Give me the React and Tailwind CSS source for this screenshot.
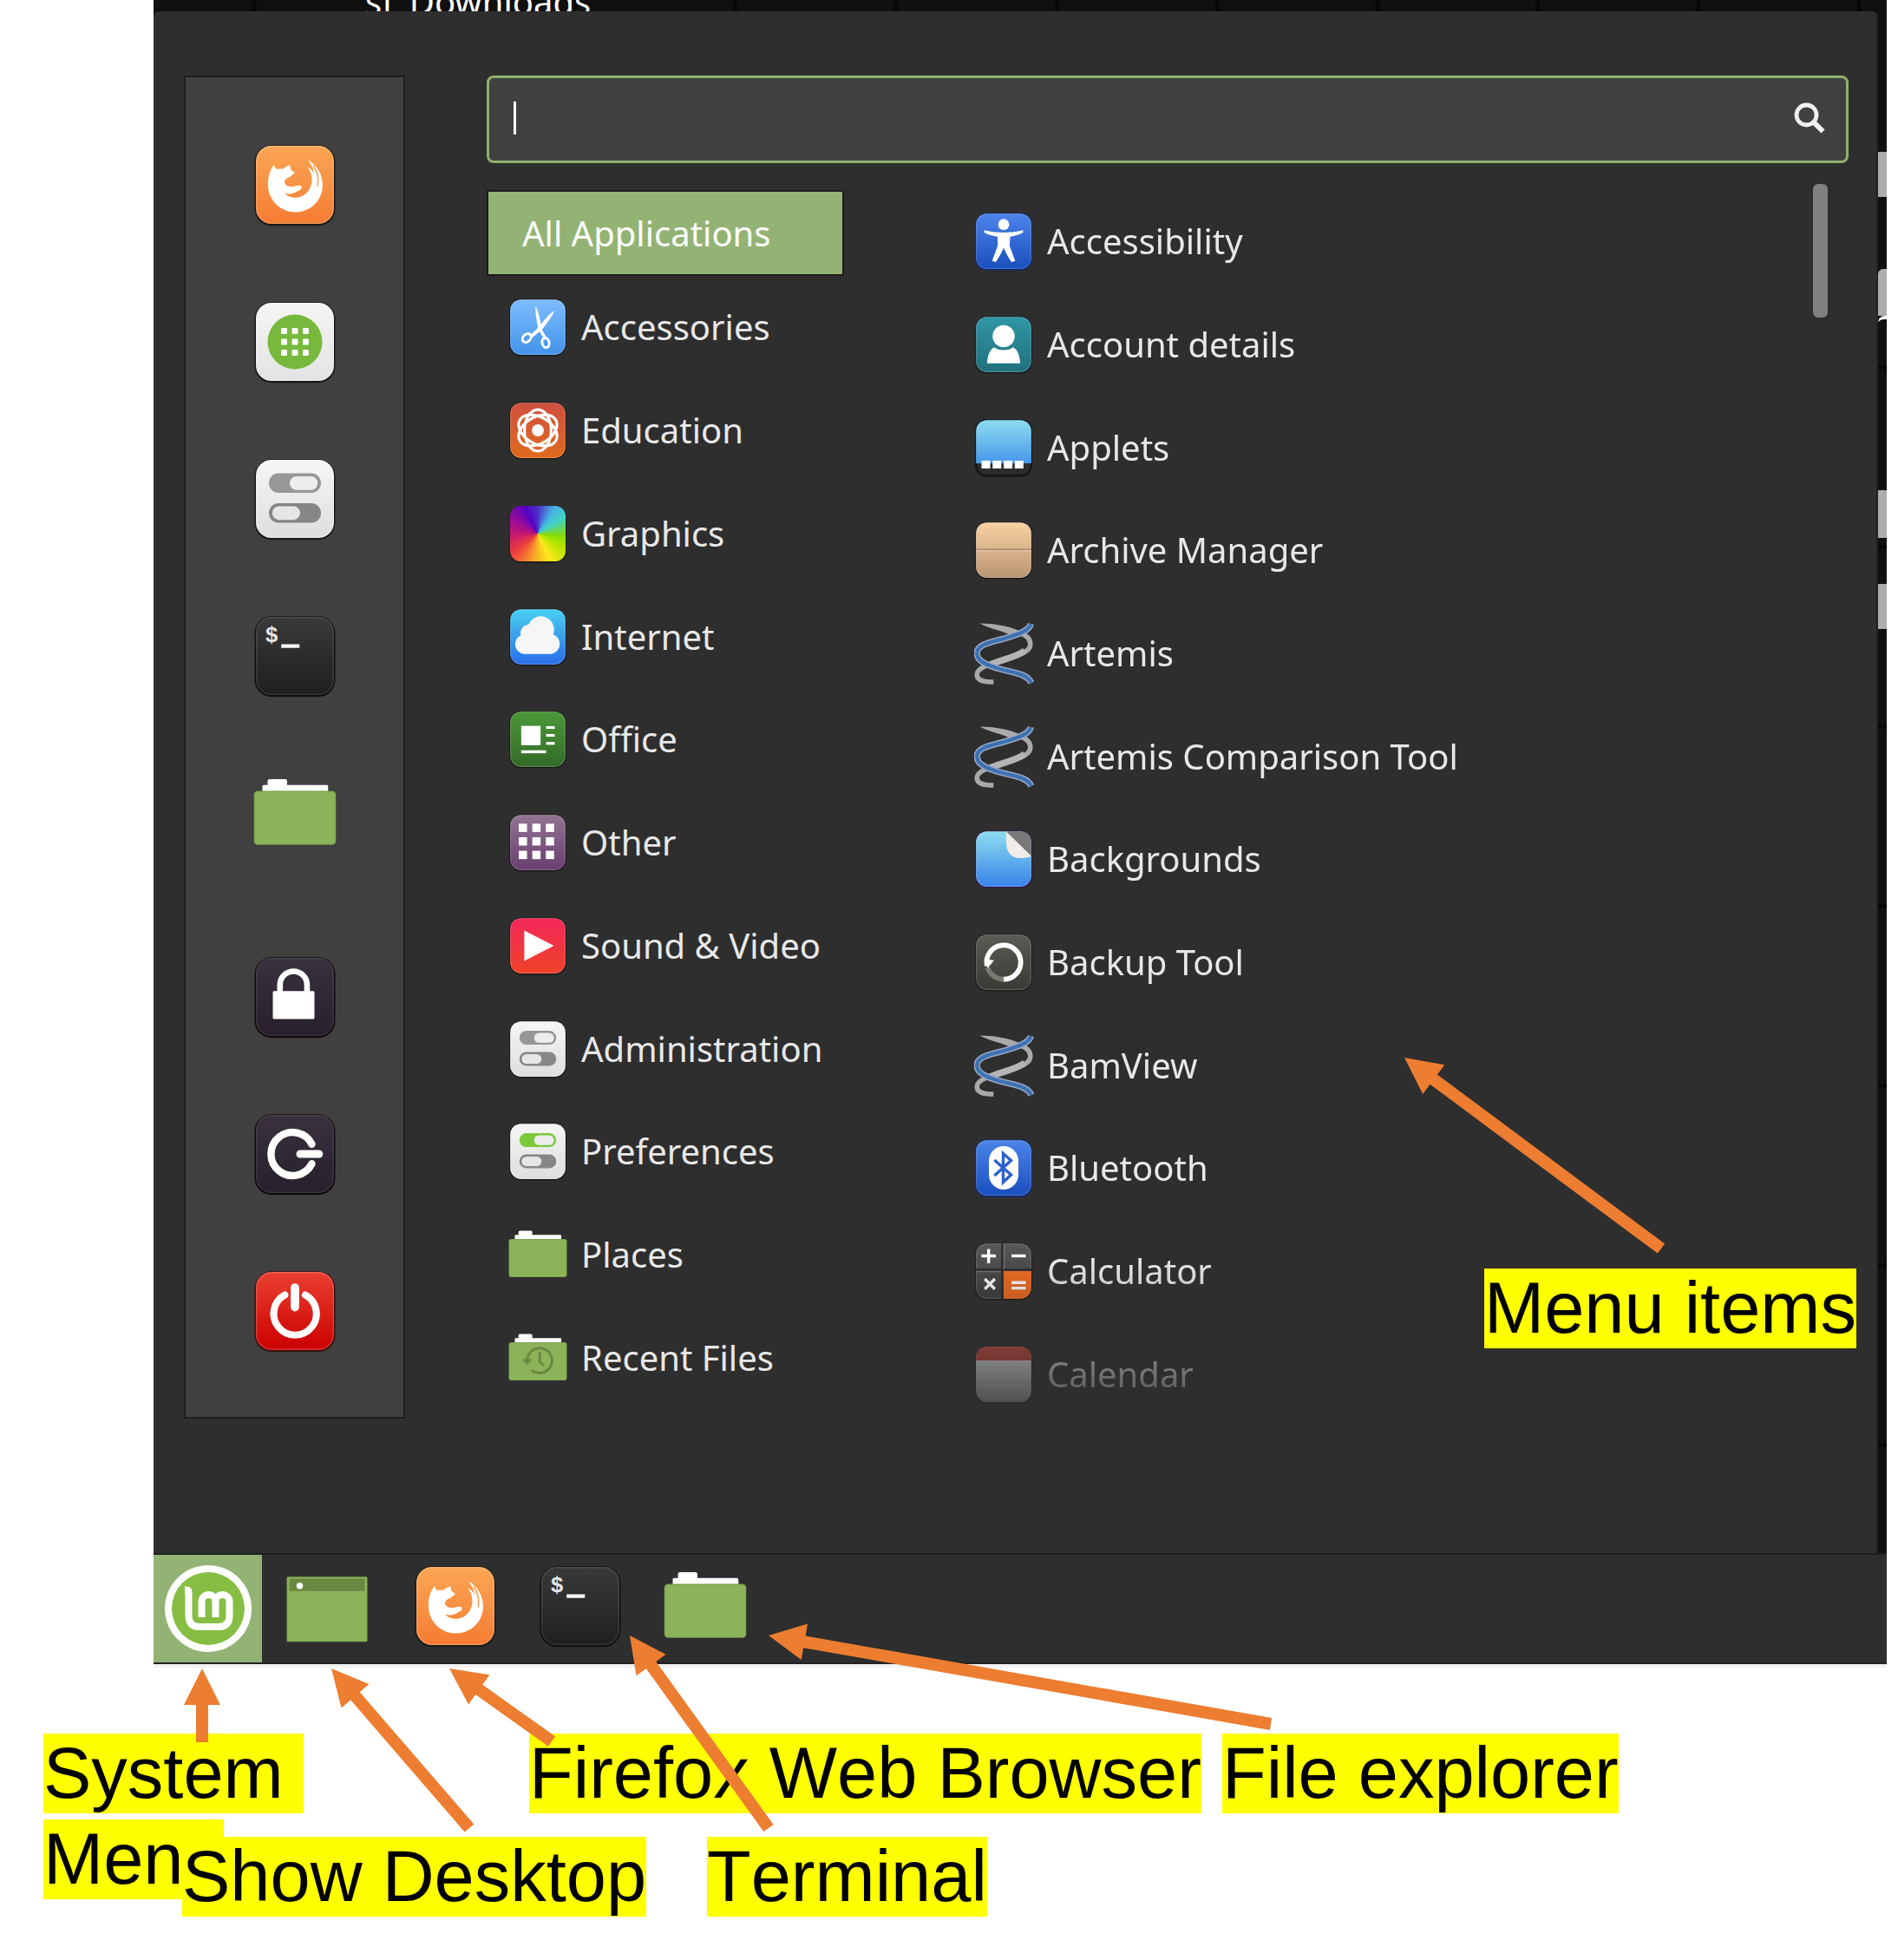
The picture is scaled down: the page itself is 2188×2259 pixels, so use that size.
import React, { useId } from "react";

/* ---------- icon building blocks (64-unit grid) ---------- */

function Svg({ children }) {
  return (
    <svg viewBox="0 0 64 64" className="size-full overflow-visible" aria-hidden="true">
      {children}
    </svg>
  );
}

function Tile({ from, to, edge = "#1a1a1a", shine = 0.18, children }) {
  const id = useId();
  return (
    <Svg>
      <defs>
        <linearGradient id={id} x1="0" y1="0" x2="0" y2="1">
          <stop offset="0" stopColor={from} />
          <stop offset="1" stopColor={to} />
        </linearGradient>
      </defs>
      <rect x="1" y="1.5" width="62" height="62" rx="13" fill={edge} />
      <rect x="2" y="2" width="60" height="60" rx="12" fill={`url(#${id})`} />
      <rect x="2.5" y="2.5" width="59" height="59" rx="11.5" fill="none" stroke="#fff" strokeOpacity={shine} />
      {children}
    </Svg>
  );
}

function Firefox() {
  return (
    <Tile from="#fba654" to="#f57c33">
      <path
        fill="#fff"
        d="M15.9 16.5C12.5 21 11 27 11.3 32.5C11.5 44 21 53 32.3 53C44 53 53.3 44 53.3 32C53.3 24 49 17 42 12.6C45 17 46.500 20 46.800 23.500C45.500 21 44 19.500 42 18.500C46 25 46 32 42.100 36.900C39 41 35 42 32.300 41.800C28 41.800 25 40 24.300 38.400C27 39.500 30 39 32 38C34.500 36.500 37.500 36 37 33.500C36.500 31.800 34 32.500 32 33C28 34 24.500 33 24 30C24.200 27 27 26.500 28 26C29 24.800 31 24 32 22.500C29.500 21.500 28 19.500 28.500 17C26 17.300 24 18.600 22.500 20C20.500 19.500 19 19.800 18 20C17 19 16.200 18 15.900 16.500Z"
      />
      <path d="M46 17C49.500 22 50.500 27 49.500 33" fill="none" stroke="#fba04f" strokeWidth="1" />
    </Tile>
  );
}

function Software() {
  const spots = [23.7, 32, 40.3];
  return (
    <Tile from="#f5f5f5" to="#e3e3e3">
      <circle cx="32" cy="32" r="21" fill="#77b93d" />
      {spots.map((y) =>
        spots.map((x) => <rect key={`${x}-${y}`} x={x - 2.3} y={y - 2.3} width="4.6" height="4.6" rx="0.8" fill="#fff" />)
      )}
    </Tile>
  );
}

function Toggles({ top = "#979797" }) {
  return (
    <Tile from="#f6f6f6" to="#dedede">
      <rect x="12" y="12.300" width="40" height="15" rx="7.500" fill={top} />
      <rect x="28" y="14.700" width="21.500" height="10.500" rx="5.200" fill="#ededed" />
      <rect x="12" y="35.300" width="40" height="15" rx="7.500" fill="#868686" />
      <rect x="14.500" y="37.600" width="21.500" height="10.500" rx="5.200" fill="#e6e6e6" />
    </Tile>
  );
}

function Preferences() {
  return <Toggles top="#7cc93c" />;
}

function Terminal() {
  return (
    <Tile from="#393939" to="#1f1f1f" edge="#101010" shine={0.1}>
      <text x="9" y="21" fontSize="17" fontWeight="700" fill="#e6e6e6" fontFamily="'Liberation Mono', monospace">$</text>
      <rect x="21.500" y="23" width="14" height="2.800" fill="#fff" />
    </Tile>
  );
}

function Folder({ children }) {
  return (
    <Svg>
      <path d="M7 17V11.500Q7 10.500 8 10.500H11V7.500Q11 6 12.500 6H24.500Q26 6 26 7.500V10.500H56.500Q57.500 10.500 57.500 11.500V17Z" fill="#fff" />
      <rect x="0.500" y="15" width="63" height="41.500" rx="3" fill="#7a9f4b" />
      <rect x="1" y="15.800" width="62" height="40" rx="2.500" fill="#8cb25a" />
      {children}
    </Svg>
  );
}

function RecentFolder() {
  return (
    <Folder>
      <g fill="none" stroke="#69893f" strokeWidth="2.800">
        <path d="M20.500 35A13.500 13.500 0 1 1 25 45" />
        <path d="M34 26V36L38.500 40.500" />
      </g>
      <path d="M15 33.500H26L20.500 40Z" fill="#69893f" />
    </Folder>
  );
}

function Lock() {
  return (
    <Tile from="#39313d" to="#271f2c" edge="#0e0c10" shine={0.08}>
      <path d="M20.500 29V22.700A10.400 10.400 0 0 1 41.300 22.700V29" fill="none" stroke="#fff" strokeWidth="4.400" />
      <rect x="15" y="27.500" width="32" height="21.500" rx="1" fill="#fff" />
    </Tile>
  );
}

function Logout() {
  return (
    <Tile from="#39313d" to="#271f2c" edge="#0e0c10" shine={0.08}>
      <g fill="none" stroke="#fff" strokeWidth="5.600" strokeLinecap="round">
        <path d="M45 24.500A16.600 16.600 0 1 0 45 39.500" />
        <path d="M36 32H50.500" strokeWidth="6" />
      </g>
    </Tile>
  );
}

function Power() {
  return (
    <Tile from="#ea4030" to="#cb0000" edge="#3a1010">
      <g fill="none" stroke="#fff" strokeWidth="5.400" strokeLinecap="round">
        <path d="M24.200 19.700A16.400 16.400 0 1 0 40 19.700" />
        <path d="M32 14V29" strokeWidth="6.500" />
      </g>
    </Tile>
  );
}

function Scissors() {
  return (
    <Tile from="#7dbcff" to="#4394ea">
      <path d="M29.500 9.500C31.500 12 36 27 36 34L42.500 45L39 45.500L33 35C31 28 29 15 29.500 9.500Z" fill="#fff" />
      <path d="M50 14C49 18 42 28 37 34L26.500 43L24 40.500L33 32C38 25 45 17 50 14Z" fill="#fff" />
      <g fill="none" stroke="#fff" strokeWidth="2.800">
        <ellipse cx="20" cy="43.800" rx="5.200" ry="4" transform="rotate(-45 20 43.800)" />
        <ellipse cx="40.500" cy="49" rx="3.800" ry="5.200" transform="rotate(-15 40.500 49)" />
      </g>
    </Tile>
  );
}

function Education() {
  return (
    <Tile from="#cf4f3f" to="#df6a1e">
      <g fill="none" stroke="#fff" strokeWidth="3">
        <ellipse cx="32" cy="32" rx="22.500" ry="14.500" transform="rotate(30 32 32)" />
        <ellipse cx="32" cy="32" rx="22.500" ry="14.500" transform="rotate(90 32 32)" />
        <ellipse cx="32" cy="32" rx="22.500" ry="14.500" transform="rotate(150 32 32)" />
      </g>
      <circle cx="32" cy="32" r="6.500" fill="#fff" />
    </Tile>
  );
}

function Graphics() {
  return (
    <span className="block size-full p-[2px]">
      <span className="block size-full rounded-[12px] bg-[conic-gradient(from_335deg,#5203c4,#4a30c8_25deg,#45b6e2_60deg,#45d2c0_85deg,#86dd08_120deg,#b4e600_145deg,#ffe81e_180deg,#f6a428_215deg,#ee3f3c_255deg,#c81a6c_290deg,#9c0c98_325deg,#5203c4)] shadow-[0_1px_2px_#111]" />
    </span>
  );
}

function Cloud() {
  return (
    <Tile from="#48d0f2" to="#2a6de8">
      <path
        d="M17 50.500A10.500 10.500 0 0 1 13.500 30.500A9.500 9.500 0 0 1 22 18.500A13 13 0 0 1 48.500 29.500A10.800 10.800 0 0 1 46 50.500Z"
        fill="#f6f6f6"
      />
    </Tile>
  );
}

function Office() {
  return (
    <Tile from="#4b9838" to="#336a28">
      <g fill="#fff">
        <rect x="14" y="17.500" width="21" height="21" />
        <rect x="41" y="17.800" width="9.300" height="3" />
        <rect x="41" y="26.300" width="9.300" height="3" />
        <rect x="41" y="35" width="9.300" height="3" />
        <rect x="14" y="44" width="27" height="3.200" />
      </g>
    </Tile>
  );
}

function Other() {
  const spots = [11.3, 26, 40.7];
  return (
    <Tile from="#917492" to="#693e70">
      {spots.map((y) => spots.map((x) => <rect key={`${x}-${y}`} x={x} y={y + 0.3} width="9" height="9" fill="#fff" />))}
    </Tile>
  );
}

function Media() {
  return (
    <Tile from="#f3285a" to="#ef4228">
      <path d="M17.300 15.500L49.500 32L17.300 48.500Z" fill="#fff" />
    </Tile>
  );
}

function Accessibility() {
  return (
    <Tile from="#4c84ea" to="#1a4fbe" edge="#0b2a72">
      <circle cx="32" cy="13.800" r="6" fill="#fff" />
      <path
        d="M11 20C18 22 25 22.500 32 22.500S46 22 53 20L53 22.500C49 25 44 26 39 27L38.500 37L44.500 53.500L40.500 54.500C38 51 35 46 32 39C29 46 26 51 23.500 54.500L19.500 53.500L25.500 37L25.500 27C20 26 15 25 11 22.500Z"
        fill="#fff"
      />
    </Tile>
  );
}

function Account() {
  return (
    <Tile from="#3196a4" to="#20707f">
      <circle cx="32" cy="23" r="12" fill="#fff" />
      <path d="M22 35C26 39 38 39 42 35C47 37 49.500 44 50 52.500H14C14.500 44 17 37 22 35Z" fill="#fff" />
    </Tile>
  );
}

function Applets() {
  const id = useId();
  return (
    <Svg>
      <defs>
        <linearGradient id={id} x1="0" y1="0" x2="0" y2="1">
          <stop offset="0" stopColor="#8edcf0" />
          <stop offset="1" stopColor="#4697ea" />
        </linearGradient>
      </defs>
      <rect x="1" y="1.500" width="62" height="62" rx="12" fill="#151515" />
      <path d="M3 49H61V51A10 10 0 0 1 51 61H13A10 10 0 0 1 3 51Z" fill="#2c2c2c" />
      <path d="M2 49V14A12 12 0 0 1 14 2H50A12 12 0 0 1 62 14V49Z" fill={`url(#${id})`} />
      <g fill="#fff">
        <rect x="8" y="46" width="9.500" height="8.500" />
        <rect x="20" y="46" width="9.500" height="8.500" />
        <rect x="32" y="46" width="9.500" height="8.500" />
        <rect x="44" y="46" width="9.500" height="8.500" />
      </g>
    </Svg>
  );
}

function Archive() {
  return (
    <Tile from="#f8d2a2" to="#b99472">
      <path d="M2 31.300H62" stroke="#a58a6c" strokeWidth="1.600" />
      <path d="M2 32.800H62" stroke="#e6c7a4" strokeWidth="1.200" />
    </Tile>
  );
}

function Helix() {
  const blue = "M61.500 0C60 7 50 11 34 15.500C18 20 3 22 3 32C3 40 12 44 26 48.500C42 53 58 54 62 64";
  return (
    <Svg>
      <path d="M6 -0.500C26 -0.500 44 4 56 11C51 15 44 14 37 11C28 7 16 5 6 -0.500Z" fill="#a9a9ac" />
      <path
        d="M50 10C58 13 61 17 61 22C61 29 52 33 40 37C24 41.500 3 46 3 55C3 61 9 63 21 63"
        fill="none"
        stroke="#a9a9ac"
        strokeWidth="5.200"
      />
      <path d="M55 29C46 37 26 39 14 46" fill="none" stroke="#b4b4b6" strokeWidth="7" />
      <path d={blue} fill="none" stroke="#98a4c4" strokeWidth="7" />
      <path d={blue} fill="none" stroke="#3c72b2" strokeWidth="4" />
    </Svg>
  );
}

function Backgrounds() {
  return (
    <Tile from="#8edcf0" to="#3884ea" edge="#38124c">
      <path d="M34.600 2H50A12 12 0 0 1 62 14V29Z" fill="#787878" />
      <path d="M34.600 2C35 8 34 14 35.500 20C37.500 27 42 31 50 31C56 31.200 59 30.500 62 29C53 20 43 10 34.600 2Z" fill="#f1ece6" />
    </Tile>
  );
}

function Backup() {
  return (
    <Tile from="#595c55" to="#383a34">
      <g fill="none" strokeWidth="5.400">
        <path d="M14.500 38A18.500 18.500 0 0 0 32 50.500" stroke="#777973" />
        <path d="M14 36A18.500 18.500 0 1 1 32 50.500" stroke="#fff" />
      </g>
      <path d="M11 28L21.500 30L14.500 38.500Z" fill="#fff" />
    </Tile>
  );
}

function Bluetooth() {
  return (
    <Tile from="#4c84ea" to="#1a4fbe" edge="#0b2a72">
      <rect x="16" y="8.500" width="32" height="47" rx="16" fill="#fff" />
      <path d="M22 23.500L40 39.500L31.500 47.500V16.500L40 24L22 40.500" fill="none" stroke="#2d62cc" strokeWidth="3.200" />
    </Tile>
  );
}

function Calculator() {
  return (
    <Tile from="#585858" to="#3c3c3c">
      <path d="M32 32H62V50A12 12 0 0 1 50 62H32Z" fill="#f06c20" />
      <path d="M30.500 2V62M2 30.500H62" stroke="#2b2b2b" strokeWidth="2.200" />
      <path d="M32.500 3V30M3 32.500H29" stroke="#757575" strokeWidth="1.200" />
      <g stroke="#fff" strokeWidth="3.200">
        <path d="M8 15.500H23.500M15.700 8V23.500" />
        <path d="M40.500 15.500H56" />
        <path d="M11.500 40.500L22.500 51.500M22.500 40.500L11.500 51.500" />
        <path d="M40.500 44.500H56M40.500 50.500H56" />
      </g>
    </Tile>
  );
}

function Calendar() {
  return (
    <Tile from="#f4f4f4" to="#dcdcdc">
      <path d="M2 17V14A12 12 0 0 1 14 2H50A12 12 0 0 1 62 14V17Z" fill="#d1473c" />
    </Tile>
  );
}

function ShowDesktop() {
  return (
    <Svg>
      <rect x="1" y="9.500" width="62" height="50" rx="1" fill="#7fa450" />
      <rect x="1.600" y="10" width="60.800" height="49" fill="#8cb25a" />
      <rect x="3" y="11" width="58" height="9.500" rx="1" fill="#698741" />
      <circle cx="11" cy="16.500" r="2.500" fill="#fff" />
    </Svg>
  );
}

function MintLogo() {
  return (
    <svg viewBox="-50 -50 100 100" className="size-[100px]" aria-hidden="true">
      <circle r="50" fill="#fff" />
      <circle r="42" fill="#86be43" />
      <g fill="none" stroke="#fff" strokeWidth="8">
        <path d="M-27 -21.500H-24.500Q-22.500 -21.500 -22.500 -18V8Q-22.500 21 -10 21H12Q24.500 21 24.500 8V-8A8 8 0 0 0 8.500 -8" />
        <path d="M8.500 10V-8A8 8 0 0 0 -7.500 -8V10" />
      </g>
    </svg>
  );
}

/* ---------- menu data ---------- */

const favorites = [
  ["Firefox Web Browser", Firefox],
  ["Software Manager", Software],
  ["System Settings", Toggles],
  ["Terminal", Terminal],
  ["Files", Folder],
];

const session = [
  ["Lock Screen", Lock],
  ["Logout", Logout],
  ["Quit", Power],
];

const categories = [
  ["Accessories", Scissors],
  ["Education", Education],
  ["Graphics", Graphics],
  ["Internet", Cloud],
  ["Office", Office],
  ["Other", Other],
  ["Sound & Video", Media],
  ["Administration", Toggles],
  ["Preferences", Preferences],
  ["Places", Folder],
  ["Recent Files", RecentFolder],
];

const applications = [
  ["Accessibility", Accessibility],
  ["Account details", Account],
  ["Applets", Applets],
  ["Archive Manager", Archive],
  ["Artemis", Helix],
  ["Artemis Comparison Tool", Helix],
  ["Backgrounds", Backgrounds],
  ["Backup Tool", Backup],
  ["BamView", Helix],
  ["Bluetooth", Bluetooth],
  ["Calculator", Calculator],
  ["Calendar", Calendar],
];

function IconButton({ label, Icon }) {
  return (
    <button type="button" aria-label={label} className="block size-24">
      <Icon />
    </button>
  );
}

function MenuRow({ label, Icon }) {
  return (
    <li className="flex flex-1">
      <button type="button" className="flex w-full items-center gap-4 text-left whitespace-nowrap">
        <span className="size-[68px] shrink-0">
          <Icon />
        </span>
        {label}
      </button>
    </li>
  );
}

/* ---------- annotations ---------- */

const arrows = [
  [233, 1923, 233, 2008],
  [382, 1923, 541, 2107],
  [518, 1923, 636, 2007],
  [726, 1885, 886, 2107],
  [886, 1885, 1465, 1987],
  [1619, 1219, 1915, 1439],
];

function Arrow({ x1, y1, x2, y2 }) {
  const length = Math.hypot(x2 - x1, y2 - y1);
  const angle = (Math.atan2(y2 - y1, x2 - x1) * 180) / Math.PI;
  return (
    <path
      transform={`translate(${x1} ${y1}) rotate(${angle})`}
      d={`M0 0L42 -21V-7H${length}V7H42V21Z`}
      fill="#ed7d31"
    />
  );
}

function Callout({ className, children }) {
  return (
    <p className={`absolute bg-[#ffff00] font-['Liberation_Sans',Arial,sans-serif] text-[83px] leading-[92px] whitespace-pre text-black [font-kerning:none] ${className}`}>
      {children}
    </p>
  );
}

export default function App() {
  return (
    <div className="relative min-h-screen overflow-hidden bg-white">
      <main className="mr-[13px] ml-[177px] border-b-4 border-[#f1f1f1] font-['Noto_Sans','Open_Sans',sans-serif] text-[40px] leading-[48px] text-[#e8e8e8]">
        <div className="bg-[#101010]">
          <div className="flex h-[13px] items-end overflow-hidden bg-[repeating-linear-gradient(90deg,#101010_0px,#101010_112px,#040404_116px,#101010_120px,#101010_185px)] pl-[244px]">
            <span className="leading-[22px] text-white">sf_Downloads</span>
          </div>

          <div className="flex">
            <section aria-label="Menu" className="flex flex-1 items-stretch rounded-t-[6px] border-r-2 border-[#222] bg-[#2e2e2e] pt-[74px] pr-8 pb-[155px] pl-[35px]">
              <nav aria-label="Favorites" className="flex w-[255px] shrink-0 flex-col items-center border-2 border-[#1e1e1e] bg-[#404040] pt-[76px] pb-[74px]">
                <div className="flex flex-col gap-[85px]">
                  {favorites.map(([label, Icon]) => (
                    <IconButton key={label} label={label} Icon={Icon} />
                  ))}
                </div>
                <div className="mt-[116px] flex flex-col gap-[85px]">
                  {session.map(([label, Icon]) => (
                    <IconButton key={label} label={label} Icon={Icon} />
                  ))}
                </div>
              </nav>

              <div className="ml-[94px] flex flex-1 flex-col">
                <label className="flex h-[101px] items-center rounded-lg border-[3px] border-[#8fb06f] bg-[#404040] pr-6 pb-1 pl-7">
                  <span className="h-[38px] w-[3px] bg-white" />
                  <input type="text" aria-label="Search" className="h-full min-w-0 flex-1 bg-transparent caret-transparent outline-none" />
                  <svg viewBox="0 0 36 36" className="size-9" aria-hidden="true" fill="none" stroke="#f0f0f0">
                    <circle cx="14.500" cy="14.500" r="11.500" strokeWidth="4.800" />
                    <path d="M23 23L33.500 33.500" strokeWidth="6" />
                  </svg>
                </label>

                <div className="flex flex-1">
                  <div className="mt-[31px] mb-[11px] flex w-[412px] flex-col">
                    <button type="button" className="h-[99px] border-2 border-[#1c1c1c] bg-[#93b374] pl-[39px] text-left text-white">
                      All Applications
                    </button>
                    <ul className="flex flex-1 flex-col pl-[25px]">
                      {categories.map(([label, Icon]) => (
                        <MenuRow key={label} label={label} Icon={Icon} />
                      ))}
                    </ul>
                  </div>

                  <ul className="mt-[31px] -mb-2 ml-[150px] flex flex-1 flex-col [mask-image:linear-gradient(to_bottom,black_calc(100%-190px),transparent_calc(100%+14px))]">
                    {applications.map(([label, Icon]) => (
                      <MenuRow key={label} label={label} Icon={Icon} />
                    ))}
                  </ul>

                  <div className="mt-6 mr-6 h-[154px] w-[17px] rounded-md bg-[#808080]" />
                </div>
              </div>
            </section>

            <div className="flex w-[10px] flex-col overflow-hidden bg-[repeating-linear-gradient(180deg,#101010_0px,#101010_200px,#040404_203px,#101010_207px)] pt-[162px]" aria-hidden="true">
              <div className="h-[52px] bg-[#adadad]" />
              <div className="mt-[83px] h-[54px] rounded-tl-md bg-[#adadad]" />
              <div className="h-2 rounded-tl-full border-t-4 border-white" />
              <div className="mt-[193px] h-[55px] bg-[#adadad]" />
              <div className="mt-[53px] h-[52px] bg-[#adadad]" />
            </div>
          </div>
        </div>

        <footer className="flex items-center border-t-2 border-b-2 border-t-[#1e1e1e] border-b-[#222] bg-[#2e2e2e]">
          <button type="button" aria-label="System Menu" className="flex h-[124px] w-[125px] items-center justify-center bg-[#93b374]">
            <MintLogo />
          </button>
          <div className="ml-[27px] flex gap-12 pb-1.5">
            <span className="mr-1 block">
              <IconButton label="Show Desktop" Icon={ShowDesktop} />
            </span>
            <IconButton label="Firefox Web Browser" Icon={Firefox} />
            <IconButton label="Terminal" Icon={Terminal} />
            <IconButton label="Files" Icon={Folder} />
          </div>
        </footer>
      </main>

      <Callout className="top-[1462px] left-[1711px]">Menu items</Callout>
      <Callout className="top-[1998px] left-[50px]">{"System "}</Callout>
      <Callout className="top-[2097px] left-[50px]">Menu</Callout>
      <Callout className="top-[1998px] left-[610px]">Firefox Web Browser</Callout>
      <Callout className="top-[1998px] left-[1409px]">File explorer</Callout>
      <Callout className="top-[2117px] left-[210px]">Show Desktop</Callout>
      <Callout className="top-[2117px] left-[815px]">Terminal</Callout>

      <svg className="pointer-events-none absolute inset-0 h-full w-full" aria-hidden="true">
        {arrows.map(([x1, y1, x2, y2]) => (
          <Arrow key={`${x1}-${x2}`} x1={x1} y1={y1} x2={x2} y2={y2} />
        ))}
      </svg>
    </div>
  );
}
